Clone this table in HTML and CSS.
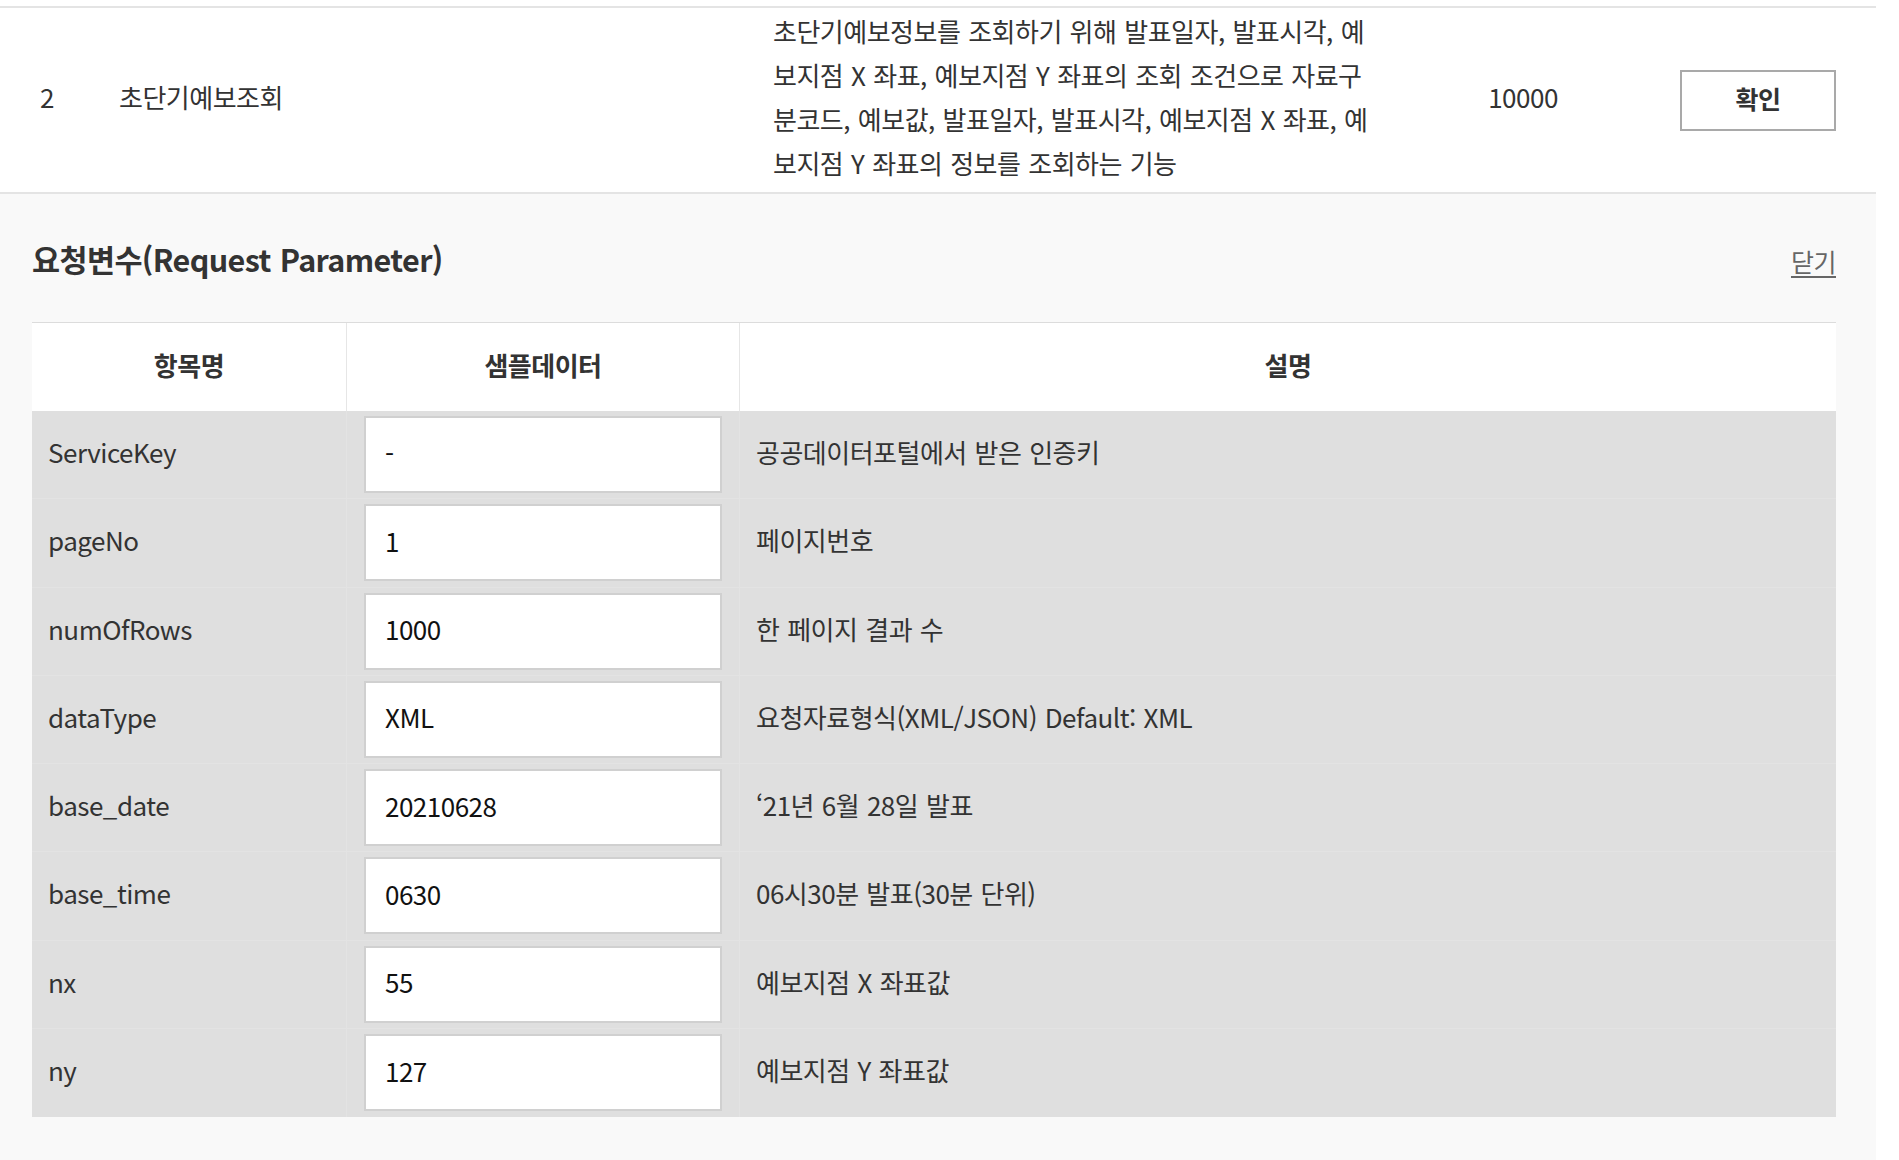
FILE: index.html
```html
<!DOCTYPE html>
<html lang="ko">
<head>
<meta charset="utf-8">
<title>초단기예보조회</title>
<link rel="stylesheet" href="styles.css">
</head>
<body>
<div class="page">
  <div class="op-row">
    <div class="op-no">2</div>
    <div class="op-name">초단기예보조회</div>
    <div class="op-desc">초단기예보정보를 조회하기 위해 발표일자, 발표시각, 예<br>보지점 X 좌표, 예보지점 Y 좌표의 조회 조건으로 자료구<br>분코드, 예보값, 발표일자, 발표시각, 예보지점 X 좌표, 예<br>보지점 Y 좌표의 정보를 조회하는 기능</div>
    <div class="op-count">10000</div>
    <div class="op-spacer"></div>
    <button class="op-btn" type="button">확인</button>
  </div>

  <div class="panel">
    <div class="panel-head">
      <h2 class="panel-title">요청변수(Request Parameter)</h2>
      <a class="panel-close" href="#">닫기</a>
    </div>

    <div class="ptable">
      <div class="prow phead">
        <div class="pcell">항목명</div>
        <div class="pcell">샘플데이터</div>
        <div class="pcell">설명</div>
      </div>
      <div class="prow">
        <div class="pcell name">ServiceKey</div>
        <div class="pcell val"><input class="pinput" type="text" value="-"></div>
        <div class="pcell desc">공공데이터포털에서 받은 인증키</div>
      </div>
      <div class="prow">
        <div class="pcell name">pageNo</div>
        <div class="pcell val"><input class="pinput" type="text" value="1"></div>
        <div class="pcell desc">페이지번호</div>
      </div>
      <div class="prow">
        <div class="pcell name">numOfRows</div>
        <div class="pcell val"><input class="pinput" type="text" value="1000"></div>
        <div class="pcell desc">한 페이지 결과 수</div>
      </div>
      <div class="prow">
        <div class="pcell name">dataType</div>
        <div class="pcell val"><input class="pinput" type="text" value="XML"></div>
        <div class="pcell desc">요청자료형식(XML/JSON) Default: XML</div>
      </div>
      <div class="prow">
        <div class="pcell name">base_date</div>
        <div class="pcell val"><input class="pinput" type="text" value="20210628"></div>
        <div class="pcell desc">‘21년 6월 28일 발표</div>
      </div>
      <div class="prow">
        <div class="pcell name">base_time</div>
        <div class="pcell val"><input class="pinput" type="text" value="0630"></div>
        <div class="pcell desc">06시30분 발표(30분 단위)</div>
      </div>
      <div class="prow">
        <div class="pcell name">nx</div>
        <div class="pcell val"><input class="pinput" type="text" value="55"></div>
        <div class="pcell desc">예보지점 X 좌표값</div>
      </div>
      <div class="prow">
        <div class="pcell name">ny</div>
        <div class="pcell val"><input class="pinput" type="text" value="127"></div>
        <div class="pcell desc">예보지점 Y 좌표값</div>
      </div>
    </div>
  </div>
</div>
</body>
</html>
```

FILE: styles.css
```css
* { box-sizing: border-box; }

html, body {
  margin: 0;
  padding: 0;
  background: #ffffff;
}

body {
  font-family: "Noto Sans CJK KR", "Noto Sans", sans-serif;
  font-size: 26px;
  letter-spacing: -0.5px;
  word-spacing: 1px;
  color: #333333;
}

.page {
  width: 1876px;
  padding-top: 6px;
}

/* operation row */
.op-row {
  display: grid;
  grid-template-columns: 79px 654px 620px 260px 1fr 156px;
  align-items: center;
  height: 188px;
  padding: 0 40px 6px;
  border-top: 2px solid #e4e4e4;
  border-bottom: 2px solid #e4e4e4;
  background: #ffffff;
}

.op-no, .op-name, .op-count {
  line-height: 36px;
}

.op-desc {
  line-height: 44px;
  white-space: nowrap;
}

.op-count {
  text-align: center;
}

.op-btn {
  height: 61px;
  width: 156px;
  margin-top: 6px;
  border: 2px solid #a9a9a9;
  background: #ffffff;
  font-family: inherit;
  font-size: 25px;
  letter-spacing: -0.5px;
  font-weight: 700;
  color: #333333;
  cursor: pointer;
  padding: 0 0 5px;
}

/* request parameter panel */
.panel {
  background: #f9f9f9;
  padding: 0 40px 43px 32px;
}

.panel-head {
  display: flex;
  justify-content: space-between;
  align-items: center;
  height: 128px;
  padding-top: 2px;
}

.panel-title {
  margin: 0;
  font-size: 30.5px;
  font-weight: 700;
  letter-spacing: -0.6px;
  color: #333333;
}

.panel-close {
  font-size: 25px;
  color: #666666;
  text-decoration: underline;
  text-underline-offset: 4px;
  margin-top: 4px;
}

.ptable {
  border-top: 1px solid #dcdcdc;
}

.prow {
  display: grid;
  grid-template-columns: 314px 393px 1fr;
  height: 88.25px;
  background: #dfdfdf;
  border-bottom: 1px solid #e3e3e3;
}

.prow:last-child {
  border-bottom: none;
}

.phead {
  height: 88px;
  background: #ffffff;
  border-bottom: none;
  font-weight: 700;
}

.pcell {
  display: flex;
  align-items: center;
  border-left: 1px solid #e3e3e3;
}

.pcell:first-child {
  border-left: none;
}

.phead .pcell {
  justify-content: center;
  border-left-color: #e6e6e6;
  padding-bottom: 6px;
}

.pcell.name {
  padding: 0 0 6px 16px;
}

.pcell.val {
  padding: 0 17px;
}

.pcell.desc {
  padding: 0 0 6px 16px;
}

.pinput {
  width: 100%;
  height: 77px;
  border: 2px solid #d0d0d0;
  background: #ffffff;
  font-family: inherit;
  font-size: 26px;
  letter-spacing: -0.5px;
  color: #111111;
  padding: 0 0 5px 19px;
  outline: none;
}
```
